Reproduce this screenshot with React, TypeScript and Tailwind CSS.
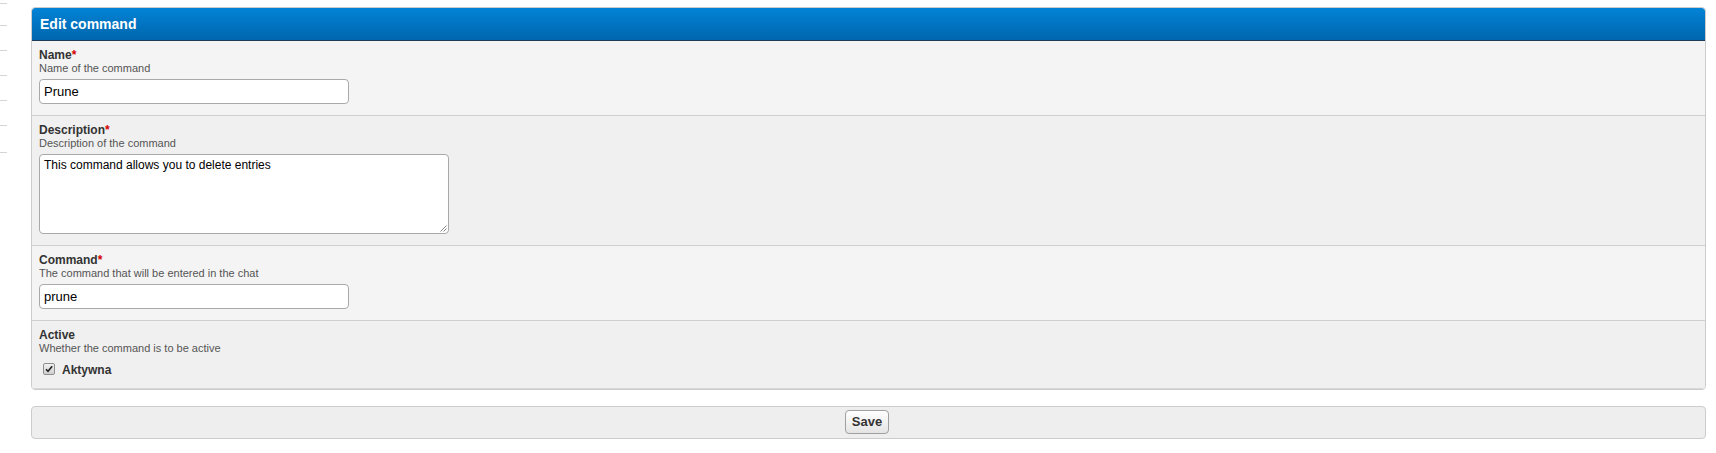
import React from "react";

function Field({
  label,
  required,
  desc,
  bg,
  children,
  last,
}: {
  label: string;
  required?: boolean;
  desc: string;
  bg: string;
  children: React.ReactNode;
  last?: boolean;
}) {
  return (
    <div className={`${bg} ${last ? "" : "border-b border-[#cfcfcf]"} px-[7px] pt-[7px] pb-[11px]`}>
      <div className="text-[12px] leading-[14px] font-bold text-[#333]">
        {label}
        {required && <span className="text-[#d40000]">*</span>}
      </div>
      <div className="text-[11px] leading-[12px] text-[#555]">{desc}</div>
      <div className="mt-[5px]">{children}</div>
    </div>
  );
}

export default function App() {
  const lines = [4, 22, 25, 25, 25, 25, 27];
  return (
    <div className="w-[1716px] h-[453px] bg-white flex font-['Liberation_Sans',Arial,sans-serif]">
      <div className="w-[31px] flex flex-col">
        {lines.map((h, i) => (
          <div key={i} style={{ height: h }} className="w-[7px] border-b border-[#d4d4d4] box-border" />
        ))}
      </div>
      <div className="flex-1 pr-[10px] pt-[7px]">
        <div className="border border-[#cccccc] rounded-[4px] bg-white overflow-hidden">
          <div className="h-[33px] bg-gradient-to-b from-[#0383d6] to-[#0066ad] border-b border-[#1e3b55] pl-[8px] text-white font-bold text-[14px] leading-[32px] rounded-t-[3px]">
            Edit command
          </div>
          <Field label="Name" required desc="Name of the command" bg="bg-[#f4f4f4]">
            <div className="w-[310px] h-[25px] bg-white border border-[#a9a9a9] rounded-[4px] px-[4px] text-[13px] leading-[23px] text-black">
              Prune
            </div>
          </Field>
          <Field label="Description" required desc="Description of the command" bg="bg-[#f0f0f0]">
            <div className="relative w-[410px] h-[80px] bg-white border border-[#a9a9a9] rounded-[4px] px-[4px] pt-[3px] text-[12px] leading-[15px] text-black">
              This command allows you to delete entries
              <svg className="absolute right-[1px] bottom-[1px]" width="7" height="7" viewBox="0 0 7 7">
                <line x1="6.5" y1="0.5" x2="0.5" y2="6.5" stroke="#888" strokeWidth="1" />
                <line x1="6.5" y1="3.5" x2="3.5" y2="6.5" stroke="#888" strokeWidth="1" />
              </svg>
            </div>
          </Field>
          <Field label="Command" required desc="The command that will be entered in the chat" bg="bg-[#f4f4f4]">
            <div className="w-[310px] h-[25px] bg-white border border-[#a9a9a9] rounded-[4px] px-[4px] text-[13px] leading-[23px] text-black">
              prune
            </div>
          </Field>
          <div className="bg-[#f0f0f0] px-[7px] pt-[7px] pb-[8px] border-b border-[#d8d8d8]">
            <div className="text-[12px] leading-[14px] font-bold text-[#333]">Active</div>
            <div className="text-[11px] leading-[12px] text-[#555]">Whether the command is to be active</div>
            <div className="flex items-center h-[20px] mt-[6px]">
              <span className="ml-[4px] -mt-[3px] w-[12px] h-[12px] border border-[#8f8f8f] rounded-[2px] bg-gradient-to-b from-[#f2f2f2] to-[#cfcfcf] flex items-center justify-center">
                <svg width="10" height="10" viewBox="0 0 10 10">
                  <path d="M2 5.2 L4 7.3 L8.2 2.2" fill="none" stroke="#222" strokeWidth="1.6" />
                </svg>
              </span>
              <span className="ml-[7px] text-[12px] font-bold text-[#333]">Aktywna</span>
            </div>
          </div>
        </div>
        <div className="mt-[16px] h-[33px] bg-[#eeeeee] border border-[#cccccc] rounded-[4px] flex justify-center pt-[3px] pr-[3px]">
          <div className="h-[24px] px-[6px] border border-[#a0a0a0] rounded-[4px] bg-gradient-to-b from-white to-[#e4e4e4] text-[13px] font-bold text-[#333] leading-[22px]">
            Save
          </div>
        </div>
      </div>
    </div>
  );
}
